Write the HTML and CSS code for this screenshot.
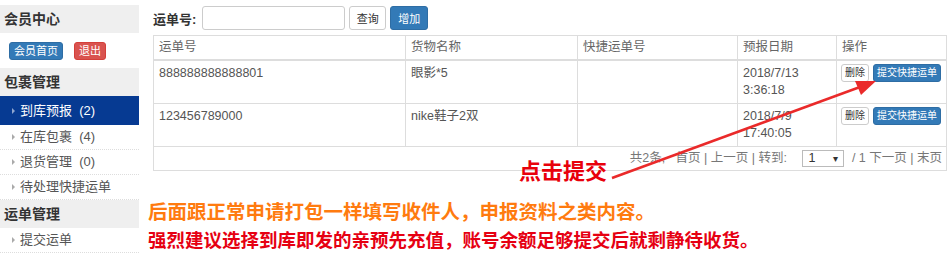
FILE: index.html
```html
<!DOCTYPE html>
<html lang="zh-CN">
<head>
    <meta charset="UTF-8">
    <meta name="viewport" content="width=device-width, initial-scale=1.0">
    <title>到库预报</title>
    <link rel="stylesheet" href="styles.css">
</head>
<body>

<div class="page">
    <aside class="sidebar">
        <div class="side-title">会员中心</div>
        <div class="side-btns">
            <a class="btn btn-primary btn-xs" href="#">会员首页</a>
            <a class="btn btn-danger btn-xs" href="#">退出</a>
        </div>
        <div class="side-title">包裹管理</div>
        <ul class="side-menu">
            <li class="active">到库预报&nbsp; (2)</li>
            <li>在库包裹&nbsp; (4)</li>
            <li>退货管理&nbsp; (0)</li>
            <li>待处理快捷运单</li>
        </ul>
        <div class="side-title">运单管理</div>
        <ul class="side-menu">
            <li>提交运单</li>
        </ul>
    </aside>

    <main class="main">
        <div class="toolbar">
            <label for="waybill">运单号:</label>
            <input type="text" id="waybill" class="form-input">
            <button class="btn btn-default">查询</button>
            <button class="btn btn-primary">增加</button>
        </div>

        <table class="grid">
            <colgroup>
                <col style="width: 252px">
                <col style="width: 172px">
                <col style="width: 160px">
                <col style="width: 99px">
                <col style="width: 110px">
            </colgroup>
            <thead>
                <tr>
                    <th>运单号</th>
                    <th>货物名称</th>
                    <th>快捷运单号</th>
                    <th>预报日期</th>
                    <th>操作</th>
                </tr>
            </thead>
            <tbody>
                <tr>
                    <td>888888888888801</td>
                    <td>眼影*5</td>
                    <td></td>
                    <td>2018/7/13<br>3:36:18</td>
                    <td class="ops"><button class="btn btn-default btn-mini">删除</button><button class="btn btn-primary btn-mini">提交快捷运单</button></td>
                </tr>
                <tr>
                    <td>123456789000</td>
                    <td>nike鞋子2双</td>
                    <td></td>
                    <td>2018/7/9<br>17:40:05</td>
                    <td class="ops"><button class="btn btn-default btn-mini">删除</button><button class="btn btn-primary btn-mini">提交快捷运单</button></td>
                </tr>
            </tbody>
            <tfoot>
                <tr>
                    <td colspan="5" class="pager">
                        共2条,&nbsp;&nbsp; 首页 | 上一页 | 转到: <span class="fake-select">1</span> / 1 下一页 | 末页
                    </td>
                </tr>
            </tfoot>
        </table>

        <p class="note note-orange">后面跟正常申请打包一样填写收件人，申报资料之类内容。</p>
        <p class="note note-red">强烈建议选择到库即发的亲预先充值，账号余额足够提交后就剩静待收货。</p>
    </main>
</div>

<!-- annotation drawn over the screenshot -->
<div class="callout">点击提交</div>
<svg class="arrow" width="950" height="254" viewBox="0 0 950 254">
    <line x1="612" y1="178" x2="860" y2="87" stroke="#ea2a2a" stroke-width="2.5"/>
    <polygon points="876,81 855,81 861,95" fill="#ea2a2a"/>
</svg>

</body>
</html>
```

FILE: styles.css
```css
body {
    margin: 0;
    width: 950px;
    height: 254px;
    overflow: hidden;
    position: relative;
    background-color: #ffffff;
    font-family: "Liberation Sans", "Noto Sans CJK SC", sans-serif;
    font-size: 13px;
    color: #555555;
}
.page {
    display: flex;
}

/* Sidebar */
.sidebar {
    width: 139px;
    flex: none;
    padding-top: 5px;
}
.side-title {
    height: 28px;
    line-height: 28px;
    padding-left: 4px;
    background-color: #efefef;
    font-size: 14px;
    font-weight: bold;
    color: #333333;
}
.side-btns {
    height: 35px;
    box-sizing: border-box;
    padding: 9px 0 0 9px;
    display: flex;
    gap: 11px;
    align-items: flex-start;
}
.side-menu {
    list-style: none;
    margin: 0;
    padding: 0;
}
.side-menu li {
    height: 25px;
    line-height: 24px;
    box-sizing: border-box;
    padding-left: 12px;
    border-bottom: 1px dotted #dddddd;
    font-size: 13px;
    color: #555555;
}
.side-menu li::before {
    content: "";
    display: inline-block;
    vertical-align: middle;
    margin: -2px 5px 0 0;
    border-left: 3px solid #aaaaaa;
    border-top: 3px solid transparent;
    border-bottom: 3px solid transparent;
}
.side-menu li.active {
    height: 29px;
    line-height: 29px;
    border-bottom: 0;
    background-color: #063a92;
    color: #ffffff;
}
.side-menu li.active::before {
    border-left-color: #8fa6cf;
}

/* Buttons */
.btn {
    display: inline-block;
    box-sizing: border-box;
    border: 1px solid transparent;
    border-radius: 3px;
    font-family: inherit;
    text-decoration: none;
    text-align: center;
    cursor: pointer;
    padding: 0;
}
.btn-primary {
    background-color: #337ab7;
    border-color: #2e6da4;
    color: #ffffff;
}
.btn-danger {
    background-color: #d9534f;
    border-color: #d43f3a;
    color: #ffffff;
}
.btn-default {
    background-color: #ffffff;
    border-color: #cccccc;
    color: #333333;
}
.btn-xs {
    height: 18px;
    line-height: 16px;
    padding: 0 4px;
    font-size: 11px;
}
.btn-mini {
    height: 18px;
    line-height: 16px;
    padding: 0 3px;
    font-size: 10px;
}

/* Main area */
.main {
    width: 793px;
    margin-left: 14px;
    padding-top: 6px;
}
.toolbar {
    display: flex;
    align-items: center;
    height: 24px;
}
.toolbar label {
    font-weight: bold;
    color: #333333;
    margin-right: 6px;
}
.form-input {
    width: 143px;
    height: 24px;
    box-sizing: border-box;
    border: 1px solid #cccccc;
    border-radius: 3px;
    margin: 0 4px 0 0;
}
.toolbar .btn {
    height: 24px;
    width: 37px;
    font-size: 11px;
    margin-right: 4px;
}
.toolbar .btn-primary {
    width: 38px;
}

/* Table */
.grid {
    margin-top: 5px;
    width: 793px;
    table-layout: fixed;
    border-collapse: collapse;
    border: 1px solid #dddddd;
}
.grid th,
.grid td {
    border: 1px solid #dddddd;
    padding: 4px 5px;
    line-height: 17px;
    text-align: left;
    vertical-align: top;
    font-size: 12.5px;
    font-weight: normal;
    color: #555555;
}
.grid thead th {
    padding: 3px 5px;
    border-bottom: 2px solid #dddddd;
    color: #666666;
}
.grid td.ops {
    padding: 3px 4px;
}
.ops .btn-mini + .btn-mini {
    margin-left: 4px;
}
.grid td.pager {
    padding: 3px 4px;
    text-align: right;
    color: #777777;
}
.fake-select {
    display: inline-block;
    position: relative;
    width: 42px;
    height: 17px;
    line-height: 15px;
    box-sizing: border-box;
    padding-left: 5px;
    margin: 0 4px 0 12px;
    border: 1px solid #bbbbbb;
    text-align: left;
    color: #333333;
    vertical-align: top;
}
.fake-select::after {
    content: "▾";
    position: absolute;
    right: 5px;
    top: 0;
    font-size: 10px;
}

/* Notes under the table */
.note {
    margin: 0 0 0 -5px;
    font-weight: bold;
    line-height: 27px;
    white-space: nowrap;
}
.note-orange {
    margin-top: 28px;
    font-size: 19.5px;
    color: #ff7b0f;
}
.note-red {
    margin-top: 1px;
    font-size: 18.5px;
    color: #e60012;
}

/* Annotation */
.callout {
    position: absolute;
    left: 519px;
    top: 160px;
    font-size: 22px;
    line-height: 24px;
    font-weight: bold;
    color: #e8000b;
}
.arrow {
    position: absolute;
    left: 0;
    top: 0;
    pointer-events: none;
}
```
